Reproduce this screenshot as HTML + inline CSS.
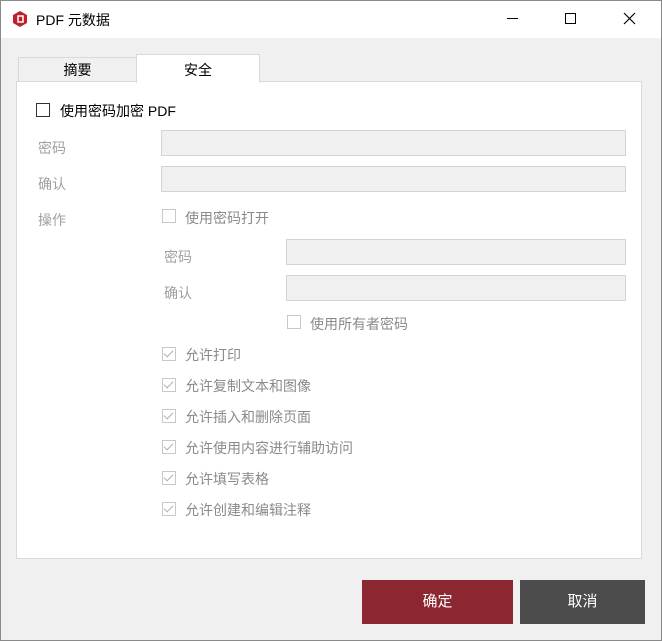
<!DOCTYPE html>
<html><head><meta charset="utf-8"><style>
*{margin:0;padding:0;box-sizing:border-box}
body{width:662px;height:641px;background:#f0f0f0;font-family:"Liberation Sans","Noto Sans CJK SC",sans-serif;font-size:14px;position:relative;overflow:hidden}
.a{position:absolute}
.title{left:0;top:0;width:662px;height:38px;background:#fff}
.panel{left:16px;top:81px;width:626px;height:478px;background:#fff;border:1px solid #d9d9d9}
.lbl{color:#a0a0a0}
.inp{background:#f0f0f0;border:1px solid #d4d4d4;height:26px}
.cb{width:14px;height:14px;border:1px solid #c8c8c8;background:#fff}
.cb.on::after{content:"";position:absolute;left:3px;top:0px;width:4px;height:8px;border:solid #b0b0b0;border-width:0 1.5px 1.5px 0;transform:rotate(45deg)}
.btn{color:#fff;text-align:center;line-height:44px;font-size:15px}
</style></head><body>
<div class="a title"></div>
<svg class="a" style="left:11px;top:10px" width="18" height="18" viewBox="0 0 18 18"><polygon points="9,1 16,5 16,13 9,17 2,13 2,5" fill="#c0202a"/><rect x="7" y="6" width="5" height="6" fill="none" stroke="#fff" stroke-width="1.5"/></svg>
<div class="a" style="left:36px;top:10px;font-size:14px;color:#000">PDF 元数据</div>
<div class="a" style="left:507px;top:18px;width:11px;height:1px;background:#000"></div>
<div class="a" style="left:565px;top:13px;width:11px;height:11px;border:1px solid #000"></div>
<svg class="a" style="left:623px;top:12px" width="13" height="13"><path d="M1 1L12 12M12 1L1 12" stroke="#000" stroke-width="1.2"/></svg>
<div class="a" style="left:18px;top:57px;width:119px;height:25px;background:#f0f0f0;border:1px solid #d9d9d9;border-bottom:none;text-align:center;line-height:25px">摘要</div>
<div class="a panel"></div>
<div class="a" style="left:136px;top:54px;width:124px;height:29px;background:#fff;border:1px solid #d9d9d9;border-bottom:none;text-align:center;line-height:30px">安全</div>
<div class="a" style="left:36px;top:103px;width:14px;height:14px;border:1px solid #333;background:#fff"></div>
<div class="a" style="left:60px;top:101px">使用密码加密 PDF</div>
<div class="a lbl" style="left:38px;top:138px">密码</div>
<div class="a inp" style="left:161px;top:130px;width:465px"></div>
<div class="a lbl" style="left:38px;top:174px">确认</div>
<div class="a inp" style="left:161px;top:166px;width:465px"></div>
<div class="a lbl" style="left:38px;top:210px">操作</div>
<div class="a cb" style="left:162px;top:209px"></div>
<div class="a lbl" style="left:185px;top:208px;color:#8a8a8a">使用密码打开</div>
<div class="a lbl" style="left:164px;top:247px">密码</div>
<div class="a inp" style="left:286px;top:239px;width:340px"></div>
<div class="a lbl" style="left:164px;top:283px">确认</div>
<div class="a inp" style="left:286px;top:275px;width:340px"></div>
<div class="a cb" style="left:287px;top:315px"></div>
<div class="a" style="left:310px;top:314px;color:#8a8a8a">使用所有者密码</div>
<div class="a cb on" style="left:162px;top:347px"></div><div class="a" style="left:185px;top:345px;color:#8a8a8a">允许打印</div>
<div class="a cb on" style="left:162px;top:378px"></div><div class="a" style="left:185px;top:376px;color:#8a8a8a">允许复制文本和图像</div>
<div class="a cb on" style="left:162px;top:409px"></div><div class="a" style="left:185px;top:407px;color:#8a8a8a">允许插入和删除页面</div>
<div class="a cb on" style="left:162px;top:440px"></div><div class="a" style="left:185px;top:438px;color:#8a8a8a">允许使用内容进行辅助访问</div>
<div class="a cb on" style="left:162px;top:471px"></div><div class="a" style="left:185px;top:469px;color:#8a8a8a">允许填写表格</div>
<div class="a cb on" style="left:162px;top:502px"></div><div class="a" style="left:185px;top:500px;color:#8a8a8a">允许创建和编辑注释</div>
<div class="a btn" style="left:362px;top:580px;width:151px;height:44px;background:#8c2630">确定</div>
<div class="a btn" style="left:520px;top:580px;width:125px;height:44px;background:#4b4b4b">取消</div>
<div class="a" style="left:0;top:0;width:662px;height:641px;border:1px solid #8a8a8a;pointer-events:none"></div>
</body></html>
